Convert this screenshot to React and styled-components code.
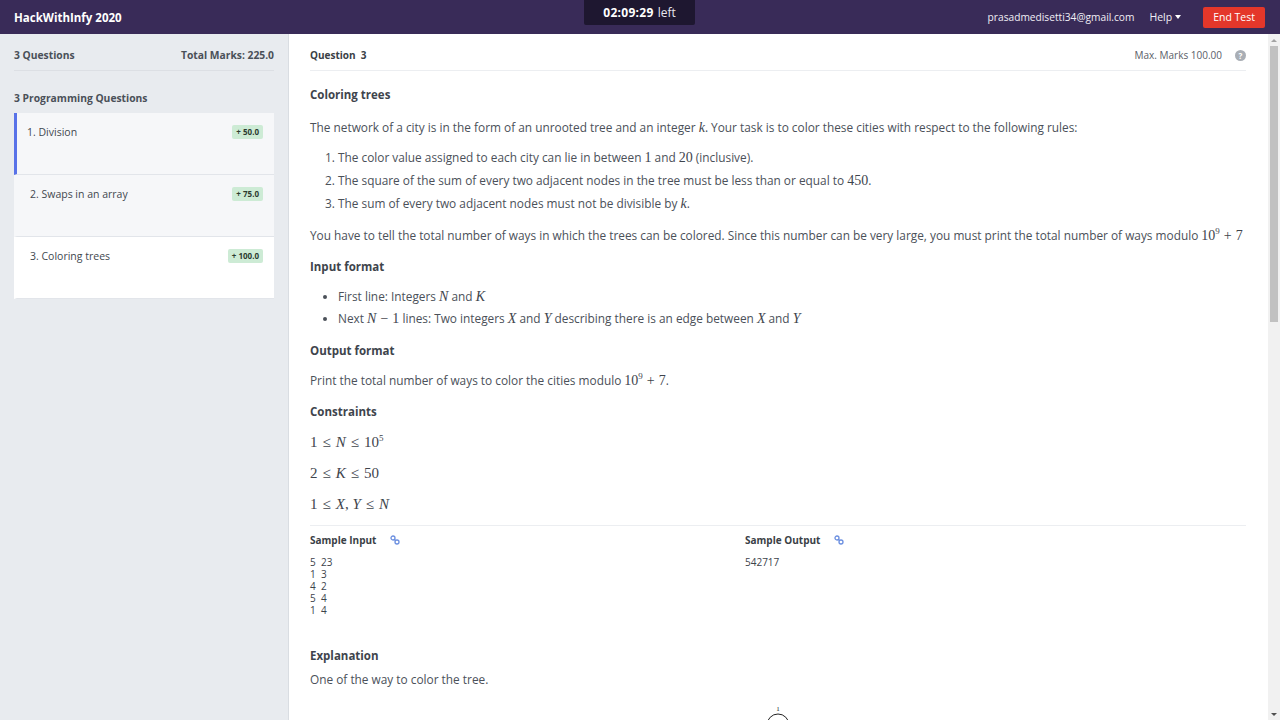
import React from "react";
import styled, { createGlobalStyle } from "styled-components";

const Global = createGlobalStyle`
  html, body { margin: 0; padding: 0; height: 100%; overflow: hidden; }
  body { font-family: "Open Sans", "Noto Sans", sans-serif; color: #3d434b; background: #fff; }
  #root { height: 100%; }
  * { box-sizing: border-box; }
`;

const Page = styled.div`
  height: 720px;
  display: flex;
  flex-direction: column;
`;

const Header = styled.header`
  height: 34px;
  flex: none;
  background: #392b58;
  display: flex;
  align-items: center;
  padding: 0 15px 0 14px;
  position: relative;
  color: #fff;
`;

const Brand = styled.div`
  font-size: 11.5px;
  font-weight: 700;
  flex: 1;
`;

const Timer = styled.div`
  position: absolute;
  left: 584px;
  top: 0;
  width: 111px;
  height: 25px;
  background: #1e1730;
  border-radius: 0 0 2px 2px;
  display: flex;
  align-items: center;
  justify-content: center;
  gap: 4px;
  font-size: 12px;
  color: #fff;
  b { font-weight: 700; letter-spacing: 0.3px; }
  span { color: #e8e6ee; }
`;

const HeaderRight = styled.div`
  display: flex;
  align-items: center;
  font-size: 10.5px;
  color: #f1eff6;
`;

const Email = styled.span`
  font-size: 10.2px;
  margin-right: 15px;
`;

const Help = styled.span`
  display: flex;
  align-items: center;
  gap: 3px;
  margin-right: 22px;
  &::after {
    content: "";
    border-left: 3.5px solid transparent;
    border-right: 3.5px solid transparent;
    border-top: 4px solid #fff;
  }
`;

const EndButton = styled.button`
  background: #e4372a;
  color: #fff;
  border: none;
  border-radius: 2px;
  height: 21px;
  padding: 0 10px;
  font-family: inherit;
  font-size: 10.5px;
`;

const Body = styled.div`
  flex: 1;
  display: flex;
  min-height: 0;
`;

const Sidebar = styled.aside`
  width: 289px;
  flex: none;
  background: #e8ebef;
  border-right: 1px solid #d9dde2;
  padding: 0 14px;
`;

const SideTop = styled.div`
  height: 37px;
  display: flex;
  align-items: center;
  justify-content: space-between;
  font-size: 10.3px;
  font-weight: 700;
  color: #4a5058;
  border-bottom: 1px solid #dcdfe4;
  padding-top: 6px;
  margin-bottom: 20px;
`;

const SideTitle = styled.div`
  font-size: 10.3px;
  font-weight: 700;
  color: #4a5058;
  height: 14px;
  line-height: 14px;
  margin-bottom: 8px;
`;

const QCard = styled.div`
  height: 62px;
  background: ${(p) => (p.$selected ? "#ffffff" : "#f6f7f9")};
  border-left: 3px solid ${(p) => (p.$active ? "#5872e8" : "transparent")};
  border-bottom: 1px solid #e2e5ea;
  display: flex;
  justify-content: space-between;
  align-items: flex-start;
  padding: 12px 11px 0 ${(p) => (p.$active ? "10px" : "13px")};
  font-size: 10.5px;
  line-height: 15px;
  color: #42484f;
`;

const Badge = styled.span`
  background: #cdebd5;
  color: #2c3a30;
  font-size: 8px;
  font-weight: 700;
  padding: 2px 4px;
  border-radius: 2px;
  line-height: 10px;
`;

const Main = styled.main`
  flex: 1;
  overflow: hidden;
  padding: 0 22px 0 21px;
`;

const ScrollTrack = styled.div`
  width: 12px;
  flex: none;
  background: #f1f1f1;
  display: flex;
  flex-direction: column;
  align-items: center;
`;

const ScrollArrow = styled.div`
  height: 12px;
  width: 12px;
  display: flex;
  align-items: center;
  justify-content: center;
  &::before {
    content: "";
    border-left: 3px solid transparent;
    border-right: 3px solid transparent;
    ${(p) => (p.$down ? "border-top: 3px solid #505050;" : "border-bottom: 3px solid #a3a3a3;")}
  }
`;

const ScrollThumb = styled.div`
  width: 8px;
  height: 276px;
  background: #c1c1c1;
`;

const ScrollSpace = styled.div`
  flex: 1;
`;

const QHead = styled.div`
  height: 37px;
  display: flex;
  align-items: center;
  justify-content: space-between;
  border-bottom: 1px solid #eceef1;
  padding-top: 6px;
  font-size: 10px;
  font-weight: 700;
  color: #3a3f46;
`;

const Marks = styled.div`
  display: flex;
  align-items: center;
  gap: 13px;
  font-weight: 400;
  font-size: 10px;
  color: #5a6068;
`;

const HelpIcon = styled.span`
  width: 11px;
  height: 11px;
  border-radius: 50%;
  background: #a9aeb5;
  color: #fff;
  font-size: 8px;
  font-weight: 700;
  display: inline-flex;
  align-items: center;
  justify-content: center;
`;

const H = styled.h3`
  margin: 0;
  font-size: 11.5px;
  font-weight: 700;
  color: #3e444c;
  line-height: 16px;
  margin-top: ${(p) => p.$mt || 0}px;
`;

const P = styled.p`
  margin: 0;
  font-size: 11.85px;
  line-height: 18px;
  color: #4b5159;
  white-space: nowrap;
  margin-top: ${(p) => p.$mt || 0}px;
`;

const OL = styled.ol`
  margin: 12px 0 0;
  padding-left: 28px;
  font-size: 11.85px;
  color: #4b5159;
  li { line-height: 18px; margin-bottom: 5px; }
`;

const UL = styled.ul`
  margin: 12px 0 0;
  padding-left: 28px;
  font-size: 11.85px;
  color: #4b5159;
  li { line-height: 18px; margin-bottom: 4px; }
`;

const M = styled.span`
  font-family: "Liberation Serif", "DejaVu Serif", serif;
  font-size: 14px;
  line-height: 0;
  color: #3e444c;
  font-style: ${(p) => (p.$i ? "italic" : "normal")};
  sup { font-size: 9px; vertical-align: 6px; line-height: 0; }
`;

const Op = styled.span`
  margin: 0 ${(p) => p.$gap || 3}px;
`;

const MathLine = styled.div`
  font-family: "Liberation Serif", "DejaVu Serif", serif;
  font-size: 15px;
  color: #3e444c;
  line-height: 20px;
  margin-top: ${(p) => p.$mt || 0}px;
  i { font-style: italic; }
  sup { font-size: 9px; vertical-align: 6px; line-height: 0; }
`;

const Samples = styled.div`
  margin-top: 11px;
  border-top: 1px solid #eceef1;
  padding-top: 7px;
  display: grid;
  grid-template-columns: 435px 1fr;
`;

const SampleTitle = styled.div`
  font-size: 10px;
  font-weight: 700;
  color: #3a3f46;
  display: flex;
  align-items: center;
  gap: 14px;
  height: 14px;
`;

const Pre = styled.pre`
  margin: 9px 0 0;
  font-family: "Open Sans", "Noto Sans", sans-serif;
  font-size: 10px;
  line-height: 12px;
  color: #3d434b;
`;

const Tree = styled.div`
  display: flex;
  justify-content: center;
  margin-top: 11px;
`;

const LinkIcon = () => (
  <svg width="10" height="10" viewBox="0 0 10 10">
    <circle cx="3" cy="3" r="2" fill="none" stroke="#6b8fe0" strokeWidth="1.3" />
    <circle cx="7" cy="7" r="2" fill="none" stroke="#6b8fe0" strokeWidth="1.3" />
    <line x1="4.3" y1="4.3" x2="5.7" y2="5.7" stroke="#6b8fe0" strokeWidth="1.3" />
  </svg>
);

const Le = () => <Op $gap={5}>≤</Op>;

export default function App() {
  return (
    <Page>
      <Global />
      <Header>
        <Brand>HackWithInfy 2020</Brand>
        <Timer>
          <b>02:09:29</b>
          <span>left</span>
        </Timer>
        <HeaderRight>
          <Email>prasadmedisetti34@gmail.com</Email>
          <Help>Help</Help>
          <EndButton>End Test</EndButton>
        </HeaderRight>
      </Header>
      <Body>
        <Sidebar>
          <SideTop>
            <span>3 Questions</span>
            <span>Total Marks: 225.0</span>
          </SideTop>
          <SideTitle>3 Programming Questions</SideTitle>
          <QCard $active>
            <span>1. Division</span>
            <Badge>+ 50.0</Badge>
          </QCard>
          <QCard>
            <span>2. Swaps in an array</span>
            <Badge>+ 75.0</Badge>
          </QCard>
          <QCard $selected>
            <span>3. Coloring trees</span>
            <Badge>+ 100.0</Badge>
          </QCard>
        </Sidebar>
        <Main>
          <QHead>
            <span>Question&nbsp;&nbsp;3</span>
            <Marks>
              <span>Max. Marks 100.00</span>
              <HelpIcon>?</HelpIcon>
            </Marks>
          </QHead>
          <H $mt={16}>Coloring trees</H>
          <P $mt={15}>
            The network of a city is in the form of an unrooted tree and an integer <M $i>k</M>. Your task is to color these cities with respect to the following rules:
          </P>
          <OL>
            <li>The color value assigned to each city can lie in between <M>1</M> and <M>20</M> (inclusive).</li>
            <li>The square of the sum of every two adjacent nodes in the tree must be less than or equal to <M>450</M>.</li>
            <li>The sum of every two adjacent nodes must not be divisible by <M $i>k</M>.</li>
          </OL>
          <P $mt={14}>
            You have to tell the total number of ways in which the trees can be colored. Since this number can be very large, you must print the total number of ways modulo <M>10<sup>9</sup><Op $gap={4}>+</Op>7</M>
          </P>
          <H $mt={15}>Input format</H>
          <UL>
            <li>First line: Integers <M $i>N</M> and <M $i>K</M></li>
            <li>Next <M><i>N</i><Op $gap={4}>−</Op>1</M> lines: Two integers <M $i>X</M> and <M $i>Y</M> describing there is an edge between <M $i>X</M> and <M $i>Y</M></li>
          </UL>
          <H $mt={16}>Output format</H>
          <P $mt={12}>
            Print the total number of ways to color the cities modulo <M>10<sup>9</sup><Op $gap={4}>+</Op>7</M>.
          </P>
          <H $mt={15}>Constraints</H>
          <MathLine $mt={12}>1<Le /><i>N</i><Le />10<sup>5</sup></MathLine>
          <MathLine $mt={11}>2<Le /><i>K</i><Le />50</MathLine>
          <MathLine $mt={11}>1<Le /><i>X</i>, <i>Y</i><Le /><i>N</i></MathLine>
          <Samples>
            <div>
              <SampleTitle>Sample Input <LinkIcon /></SampleTitle>
              <Pre>{"5  23\n1  3\n4  2\n5  4\n1  4"}</Pre>
            </div>
            <div>
              <SampleTitle>Sample Output <LinkIcon /></SampleTitle>
              <Pre>542717</Pre>
            </div>
          </Samples>
          <H $mt={32}>Explanation</H>
          <P $mt={6}>One of the way to color the tree.</P>
          <Tree>
            <svg width="120" height="200" viewBox="0 0 120 200">
              <text x="60" y="12" fontSize="7" textAnchor="middle" fill="#222" fontFamily="Liberation Serif">1</text>
              <circle cx="60" cy="26" r="11" fill="none" stroke="#222" strokeWidth="1" />
              <line x1="52" y1="34" x2="30" y2="70" stroke="#222" />
              <line x1="68" y1="34" x2="90" y2="70" stroke="#222" />
              <circle cx="27" cy="80" r="11" fill="none" stroke="#222" />
              <circle cx="93" cy="80" r="11" fill="none" stroke="#222" />
            </svg>
          </Tree>
        </Main>
        <ScrollTrack>
          <ScrollArrow />
          <ScrollThumb />
          <ScrollSpace />
          <ScrollArrow $down />
        </ScrollTrack>
      </Body>
    </Page>
  );
}
